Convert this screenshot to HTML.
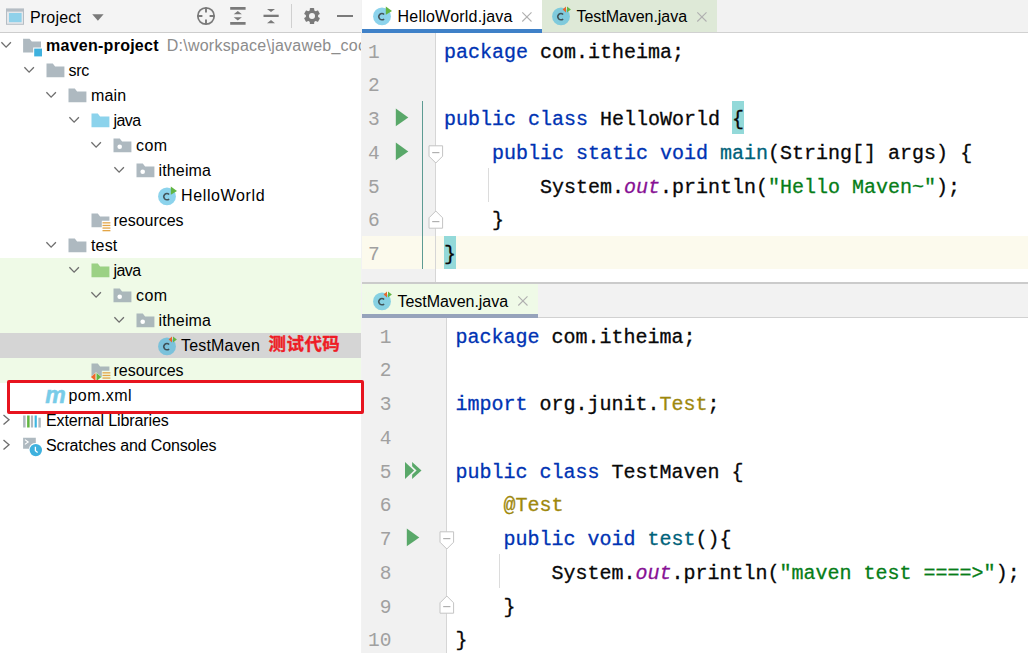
<!DOCTYPE html>
<html><head><meta charset="utf-8"><title>maven-project</title>
<style>
html,body{margin:0;padding:0}
body{width:1028px;height:653px;overflow:hidden;position:relative;background:#fff;font-family:"Liberation Sans", "Noto Sans CJK SC", sans-serif;font-size:16px;color:#000}
.abs{position:absolute}
#left{position:absolute;left:0;top:0;width:361px;height:653px;background:#fff;overflow:hidden}
#hdr{position:absolute;left:0;top:0;width:361px;height:32px;background:#f4f4f4;border-bottom:1px solid #cdcdcd}
.row{position:absolute;left:0;width:361px;height:25px;white-space:nowrap}
.row.g{background:#effae7}
.row.sel{background:#d5d5d5}
.arw{position:absolute;top:5.4px;width:14px;height:14px}
.icw{position:absolute;top:2.5px;width:20px;height:20px}
.ic,.ar{display:block;overflow:visible}
.tx{position:absolute;top:0;line-height:25px;height:25px;font-size:16px}
.path{color:#8c8c8c;font-weight:400;letter-spacing:0.23px;margin-left:8px}
.note{position:absolute;left:87.5px;top:-1.2px;line-height:25px;color:#ee1c25;font-weight:700;letter-spacing:0.45px;font-size:17.5px;-webkit-text-stroke:0.35px #ee1c25;font-family:"Liberation Sans","Noto Sans CJK SC",sans-serif}
.mvn{display:block;font:italic 700 23px/20px "Liberation Sans",sans-serif;color:#78cce8;margin-top:-0.8px;margin-left:0.8px;-webkit-text-stroke:0.5px #78cce8;letter-spacing:-1px}
#right{position:absolute;left:362px;top:0;width:666px;height:653px;background:#fff;overflow:hidden}
.tabs{position:absolute;left:0;width:666px;background:#f2f2f2}
.tab{position:absolute;top:0;height:100%}
.tt{position:absolute;top:0;line-height:31px;font-size:16px;white-space:nowrap}
.ed{position:absolute;left:0;width:666px;overflow:hidden;background:#fff;font-family:"Liberation Mono", "DejaVu Sans Mono", monospace;font-size:20px}
.gut{position:absolute;left:0;top:0;height:100%;background:#f1f1f1}
.gl{position:absolute;top:0;width:1px;height:100%;background:#d6d6d6}
.caret{position:absolute;left:0;width:666px;background:#fcfaed}
.ln{position:absolute;left:0;text-align:right;color:#a0a0a0;line-height:33.75px;height:33.75px;font-size:19.5px;margin-top:3.6px}
.cl{position:absolute;white-space:pre;line-height:33.75px;height:33.75px;color:#080808;margin-top:2.5px;-webkit-text-stroke:0.3px}
.k{color:#0033b3}.s{color:#067d17}.f{color:#871094;font-style:italic}.m{color:#00627a}.a{color:#9e880d}
.br{background:#93d9d9;display:inline-block;height:33.75px;margin-top:-2.5px;padding-top:2.5px;box-sizing:border-box;vertical-align:top}
#redbox{position:absolute;left:7px;top:380px;width:351px;height:28px;border:3px solid #e7141f;border-radius:2px}
</style></head><body>
<div id="left">
<div id="hdr">
<svg class="abs" style="left:5px;top:7px" width="20" height="20" viewBox="0 0 20 20"><rect x="1" y="1.4" width="18" height="16.4" fill="#b5bdc4"/><rect x="2" y="4.6" width="16" height="12.2" fill="#e4e7ea"/><rect x="4" y="6" width="12.6" height="9.2" fill="#8fd1ea"/></svg>
<span class="abs" style="left:30px;top:0.5px;line-height:33px;font-size:16px;letter-spacing:0.171px">Project</span>
<svg class="abs" style="left:92px;top:14px" width="12" height="8" viewBox="0 0 12 8"><path d="M0.2 0.2h11.4L5.9 6.8z" fill="#7a7a7a"/></svg>
<svg class="abs" style="left:196px;top:6px" width="20" height="20" viewBox="0 0 20 20"><circle cx="10" cy="10" r="8.2" fill="none" stroke="#7a7a7a" stroke-width="1.7"/><path d="M10 1.8v4.6M10 13.6v4.6M1.8 10h4.6M13.6 10h4.6" stroke="#7a7a7a" stroke-width="1.9"/></svg>
<svg class="abs" style="left:228px;top:6px" width="20" height="20" viewBox="0 0 20 20"><path d="M2.2 1.1h15.4v2.6H2.2zM2.2 16h15.4v2.7H2.2z" fill="#7a7a7a"/><path d="M9.8 5l4.1 3.2H5.7zM9.8 14.5l4.1-3.2H5.7z" fill="#7a7a7a"/></svg>
<svg class="abs" style="left:261px;top:6px" width="20" height="20" viewBox="0 0 20 20"><path d="M2.5 8.7h15.2v2.3H2.5z" fill="#7a7a7a"/><path d="M10 6.1l4-3.2H6zM10 14l4 3.3H6z" fill="#7a7a7a"/></svg>
<div class="abs" style="left:291px;top:4px;width:1px;height:24px;background:#d0d0d0"></div>
<svg class="abs" style="left:302px;top:6px" width="20" height="20" viewBox="0 0 20 20"><g transform="translate(10 10.1)" fill="#7a7a7a"><circle r="6.2"/><rect x="-2.2" y="-8" width="4.4" height="16" rx="0.7"/><rect x="-2.2" y="-8" width="4.4" height="16" rx="0.7" transform="rotate(60)"/><rect x="-2.2" y="-8" width="4.4" height="16" rx="0.7" transform="rotate(120)"/><circle r="3" fill="#f4f4f4"/></g></svg>
<div class="abs" style="left:337px;top:15px;width:15.5px;height:2.4px;background:#7a7a7a"></div>
</div>
<div class="row " style="top:33px"><span class="arw" style="left:-0.1px"><svg class="ar" width="14" height="14" viewBox="0 0 14 14"><path d="M1.4 4.2L6.1 9.1l4.8-4.9" fill="none" stroke="#6e6e6e" stroke-width="1.35"/></svg></span><span class="icw" style="left:22.0px"><svg class="ic" width="20" height="20" viewBox="0 0 20 20"><path d="M1.1 2.7h6.4l2.3 2.8H19v6.1h-7.8v4.9H1.1z" fill="#9aa7b0" fill-opacity="0.8"/><rect x="12.2" y="12.6" width="7.8" height="7.8" fill="#3eb1de"/></svg></span><span class="tx" style="left:46.0px;letter-spacing:0.000px"><b style="letter-spacing:0.263px">maven-project</b><span class="path">D:\workspace\javaweb_coc</span></span></div>
<div class="row " style="top:58px"><span class="arw" style="left:22.5px"><svg class="ar" width="14" height="14" viewBox="0 0 14 14"><path d="M1.4 4.2L6.1 9.1l4.8-4.9" fill="none" stroke="#6e6e6e" stroke-width="1.35"/></svg></span><span class="icw" style="left:44.5px"><svg class="ic" width="20" height="20" viewBox="0 0 20 20"><path d="M1.5 2.6h6.3l2.3 2.8h9.3v10.8H1.5z" fill="#9aa7b0" fill-opacity="0.8"/></svg></span><span class="tx" style="left:68.5px;letter-spacing:-0.277px">src</span></div>
<div class="row " style="top:83px"><span class="arw" style="left:45.1px"><svg class="ar" width="14" height="14" viewBox="0 0 14 14"><path d="M1.4 4.2L6.1 9.1l4.8-4.9" fill="none" stroke="#6e6e6e" stroke-width="1.35"/></svg></span><span class="icw" style="left:67.0px"><svg class="ic" width="20" height="20" viewBox="0 0 20 20"><path d="M1.5 2.6h6.3l2.3 2.8h9.3v10.8H1.5z" fill="#9aa7b0" fill-opacity="0.8"/></svg></span><span class="tx" style="left:91.0px;letter-spacing:0.178px">main</span></div>
<div class="row " style="top:108px"><span class="arw" style="left:67.7px"><svg class="ar" width="14" height="14" viewBox="0 0 14 14"><path d="M1.4 4.2L6.1 9.1l4.8-4.9" fill="none" stroke="#6e6e6e" stroke-width="1.35"/></svg></span><span class="icw" style="left:89.5px"><svg class="ic" width="20" height="20" viewBox="0 0 20 20"><path d="M1.5 2.6h6.3l2.3 2.8h9.3v10.8H1.5z" fill="#40b6e0" fill-opacity="0.6"/></svg></span><span class="tx" style="left:113.5px;letter-spacing:-0.540px">java</span></div>
<div class="row " style="top:133px"><span class="arw" style="left:90.3px"><svg class="ar" width="14" height="14" viewBox="0 0 14 14"><path d="M1.4 4.2L6.1 9.1l4.8-4.9" fill="none" stroke="#6e6e6e" stroke-width="1.35"/></svg></span><span class="icw" style="left:112.0px"><svg class="ic" width="20" height="20" viewBox="0 0 20 20"><path d="M1.5 2.6h6.3l2.3 2.8h9.3v10.8H1.5z" fill="#9aa7b0" fill-opacity="0.8"/><circle cx="7.7" cy="10.8" r="2.3" fill="#fff"/></svg></span><span class="tx" style="left:136.0px;letter-spacing:0.457px">com</span></div>
<div class="row " style="top:158px"><span class="arw" style="left:112.9px"><svg class="ar" width="14" height="14" viewBox="0 0 14 14"><path d="M1.4 4.2L6.1 9.1l4.8-4.9" fill="none" stroke="#6e6e6e" stroke-width="1.35"/></svg></span><span class="icw" style="left:134.5px"><svg class="ic" width="20" height="20" viewBox="0 0 20 20"><path d="M1.5 2.6h6.3l2.3 2.8h9.3v10.8H1.5z" fill="#9aa7b0" fill-opacity="0.8"/><circle cx="7.7" cy="10.8" r="2.3" fill="#fff"/></svg></span><span class="tx" style="left:158.5px;letter-spacing:0.146px">itheima</span></div>
<div class="row " style="top:183px"><span class="icw" style="left:157.0px"><svg class="ic" width="20" height="20" viewBox="0 0 20 20"><circle cx="10" cy="10.4" r="8.9" fill="#40b6e0" fill-opacity="0.6"/><path d="M12.1 8.4a3.05 3.2 0 1 0 0 4.5" fill="none" stroke="#231f20" stroke-opacity="0.7" stroke-width="1.5"/><path d="M13.8 0.6v8.1L20 4.9z" fill="#62b543"/></svg></span><span class="tx" style="left:181.0px;letter-spacing:0.625px">HelloWorld</span></div>
<div class="row " style="top:208px"><span class="icw" style="left:89.5px"><svg class="ic" width="20" height="20" viewBox="0 0 20 20"><path d="M1.5 2.6h6.3l2.3 2.8h9.3V9.8h-7.6v6.4H1.5z" fill="#9aa7b0" fill-opacity="0.8"/><rect x="12.5" y="11.2" width="7.9" height="1.3" fill="#e3a546"/><rect x="12.5" y="13.8" width="7.9" height="1.3" fill="#e3a546"/><rect x="12.5" y="16.4" width="7.9" height="1.3" fill="#e3a546"/><rect x="12.5" y="19.0" width="7.9" height="1.3" fill="#e3a546"/></svg></span><span class="tx" style="left:113.5px;letter-spacing:-0.028px">resources</span></div>
<div class="row " style="top:233px"><span class="arw" style="left:45.1px"><svg class="ar" width="14" height="14" viewBox="0 0 14 14"><path d="M1.4 4.2L6.1 9.1l4.8-4.9" fill="none" stroke="#6e6e6e" stroke-width="1.35"/></svg></span><span class="icw" style="left:67.0px"><svg class="ic" width="20" height="20" viewBox="0 0 20 20"><path d="M1.5 2.6h6.3l2.3 2.8h9.3v10.8H1.5z" fill="#9aa7b0" fill-opacity="0.8"/></svg></span><span class="tx" style="left:91.0px;letter-spacing:0.150px">test</span></div>
<div class="row g" style="top:258px"><span class="arw" style="left:67.7px"><svg class="ar" width="14" height="14" viewBox="0 0 14 14"><path d="M1.4 4.2L6.1 9.1l4.8-4.9" fill="none" stroke="#6e6e6e" stroke-width="1.35"/></svg></span><span class="icw" style="left:89.5px"><svg class="ic" width="20" height="20" viewBox="0 0 20 20"><path d="M1.5 2.6h6.3l2.3 2.8h9.3v10.8H1.5z" fill="#62b543" fill-opacity="0.6"/></svg></span><span class="tx" style="left:113.5px;letter-spacing:-0.540px">java</span></div>
<div class="row g" style="top:283px"><span class="arw" style="left:90.3px"><svg class="ar" width="14" height="14" viewBox="0 0 14 14"><path d="M1.4 4.2L6.1 9.1l4.8-4.9" fill="none" stroke="#6e6e6e" stroke-width="1.35"/></svg></span><span class="icw" style="left:112.0px"><svg class="ic" width="20" height="20" viewBox="0 0 20 20"><path d="M1.5 2.6h6.3l2.3 2.8h9.3v10.8H1.5z" fill="#9aa7b0" fill-opacity="0.8"/><circle cx="7.7" cy="10.8" r="2.3" fill="#fff"/></svg></span><span class="tx" style="left:136.0px;letter-spacing:0.457px">com</span></div>
<div class="row g" style="top:308px"><span class="arw" style="left:112.9px"><svg class="ar" width="14" height="14" viewBox="0 0 14 14"><path d="M1.4 4.2L6.1 9.1l4.8-4.9" fill="none" stroke="#6e6e6e" stroke-width="1.35"/></svg></span><span class="icw" style="left:134.5px"><svg class="ic" width="20" height="20" viewBox="0 0 20 20"><path d="M1.5 2.6h6.3l2.3 2.8h9.3v10.8H1.5z" fill="#9aa7b0" fill-opacity="0.8"/><circle cx="7.7" cy="10.8" r="2.3" fill="#fff"/></svg></span><span class="tx" style="left:158.5px;letter-spacing:0.146px">itheima</span></div>
<div class="row sel" style="top:333px"><span class="icw" style="left:157.0px"><svg class="ic" width="20" height="20" viewBox="0 0 20 20"><circle cx="10" cy="10.4" r="8.9" fill="#40b6e0" fill-opacity="0.6"/><path d="M12.1 8.4a3.05 3.2 0 1 0 0 4.5" fill="none" stroke="#231f20" stroke-opacity="0.7" stroke-width="1.5"/><path d="M15 0.4v6.1L11.6 3.5z" fill="#e8662c"/><path d="M16 0.4v6.1l3.9-3z" fill="#62b543"/></svg></span><span class="tx" style="left:181.0px;letter-spacing:0.180px">TestMaven<span class="note">测试代码</span></span></div>
<div class="row g" style="top:358px"><span class="icw" style="left:89.5px"><svg class="ic" width="20" height="20" viewBox="0 0 20 20"><path d="M1.5 2.6h6.3l2.3 2.8h9.3V9.8h-7.6v6.4H1.5z" fill="#9aa7b0" fill-opacity="0.8"/><rect x="12.5" y="11.2" width="7.9" height="1.3" fill="#e3a546"/><rect x="12.5" y="13.8" width="7.9" height="1.3" fill="#e3a546"/><rect x="12.5" y="16.4" width="7.9" height="1.3" fill="#e3a546"/><rect x="12.5" y="19.0" width="7.9" height="1.3" fill="#e3a546"/><path d="M6 11.2L0.6 16l5.4 4.8L11.6 16z" fill="#effae7"/><path d="M5.5 11.9v8.2L0.9 16z" fill="#f0672a"/><path d="M6.5 11.9v8.2L11.3 16z" fill="#62b543"/></svg></span><span class="tx" style="left:113.5px;letter-spacing:-0.028px">resources</span></div>
<div class="row " style="top:383px"><span class="icw" style="left:44.5px"><span class="mvn">m</span></span><span class="tx" style="left:68.5px;letter-spacing:0.436px">pom.xml</span></div>
<div class="row " style="top:408px"><span class="arw" style="left:-0.1px"><svg class="ar" width="14" height="14" viewBox="0 0 14 14"><path d="M3.5 2L9 6.8l-5.5 4.7" fill="none" stroke="#6e6e6e" stroke-width="1.35"/></svg></span><span class="icw" style="left:22.0px"><svg class="ic" width="20" height="20" viewBox="0 0 20 20"><rect x="1.1" y="4.5" width="2.5" height="12.0" fill="#9aa7b0" fill-opacity="0.8"/><rect x="5.1" y="4.5" width="2.5" height="12.0" fill="#62b543" fill-opacity="1"/><rect x="8.9" y="4.5" width="2.2" height="12.0" fill="#9aa7b0" fill-opacity="0.8"/><rect x="12.6" y="4.5" width="2.2" height="12.0" fill="#40b6e0" fill-opacity="1"/><rect x="16.4" y="6.7" width="2.4" height="9.8" fill="#9aa7b0" fill-opacity="0.8"/></svg></span><span class="tx" style="left:46.0px;letter-spacing:-0.106px">External Libraries</span></div>
<div class="row " style="top:433px"><span class="arw" style="left:-0.1px"><svg class="ar" width="14" height="14" viewBox="0 0 14 14"><path d="M3.5 2L9 6.8l-5.5 4.7" fill="none" stroke="#6e6e6e" stroke-width="1.35"/></svg></span><span class="icw" style="left:22.0px"><svg class="ic" width="20" height="20" viewBox="0 0 20 20"><path d="M1.1 1.8h12.7v5.2a7 7 0 0 0-6.9 5.7H1.1z" fill="#9aa7b0" fill-opacity="0.8"/><path d="M2.9 3.6l3.3 2.4-3.3 2.4" fill="none" stroke="#fff" stroke-width="1.1"/><circle cx="13.8" cy="14.1" r="6.2" fill="#3eb1de"/><path d="M13.4 10.7v4l2.2 1.7" fill="none" stroke="#fff" stroke-width="1.3"/></svg></span><span class="tx" style="left:46.0px;letter-spacing:-0.143px">Scratches and Consoles</span></div>
</div>
<div id="right">
<div class="tabs" style="top:0;height:32px;border-bottom:1px solid #d1d1d1">
<div class="tab" style="left:0px;width:180px;background:#fff"><span class="abs" style="left:10.2px;top:5.8px"><svg class="ic" width="20" height="20" viewBox="0 0 20 20"><circle cx="10" cy="10.4" r="8.9" fill="#40b6e0" fill-opacity="0.6"/><path d="M12.1 8.4a3.05 3.2 0 1 0 0 4.5" fill="none" stroke="#231f20" stroke-opacity="0.7" stroke-width="1.5"/><path d="M13.8 0.6v8.1L20 4.9z" fill="#62b543"/></svg></span><span class="tt" style="left:35.5px;top:0.5px;letter-spacing:0.230px">HelloWorld.java</span><svg class="abs" style="left:158.8px;top:10.5px" width="12" height="12" viewBox="0 0 12 12"><path d="M1.3 1.3l9.2 9.2M10.5 1.3l-9.2 9.2" stroke="#b0b0b0" stroke-width="1.1" fill="none"/></svg><div class="abs" style="left:0;top:29.0px;width:100%;height:4px;background:#3f81c8"></div></div>
<div class="tab" style="left:180px;width:175px;background:#dee9d7"><span class="abs" style="left:8.8px;top:5.8px"><svg class="ic" width="20" height="20" viewBox="0 0 20 20"><circle cx="10" cy="10.4" r="8.9" fill="#40b6e0" fill-opacity="0.6"/><path d="M12.1 8.4a3.05 3.2 0 1 0 0 4.5" fill="none" stroke="#231f20" stroke-opacity="0.7" stroke-width="1.5"/><path d="M15 0.4v6.1L11.6 3.5z" fill="#e8662c"/><path d="M16 0.4v6.1l3.9-3z" fill="#62b543"/></svg></span><span class="tt" style="left:34.5px;top:0.5px;letter-spacing:-0.048px">TestMaven.java</span><svg class="abs" style="left:153.8px;top:10.5px" width="12" height="12" viewBox="0 0 12 12"><path d="M1.3 1.3l9.2 9.2M10.5 1.3l-9.2 9.2" stroke="#b0b0b0" stroke-width="1.1" fill="none"/></svg></div>
</div>
<div class="ed" style="top:33.00px;height:249.00px"><div class="gut" style="width:73px"></div><div class="caret" style="top:202.50px;height:33.75px"></div><div class="gl" style="left:73px"></div><div class="ln" style="top:0.00px;width:17.6px">1</div><div class="cl" style="top:0.00px;left:82.0px"><span class="k">package</span> com.itheima;</div><div class="ln" style="top:33.75px;width:17.6px">2</div><div class="cl" style="top:33.75px;left:82.0px"></div><div class="ln" style="top:67.50px;width:17.6px">3</div><div class="cl" style="top:67.50px;left:82.0px"><span class="k">public class</span> HelloWorld <span class="br">{</span></div><div class="ln" style="top:101.25px;width:17.6px">4</div><div class="cl" style="top:101.25px;left:82.0px">    <span class="k">public static void</span> <span class="m">main</span>(String[] args) {</div><div class="ln" style="top:135.00px;width:17.6px">5</div><div class="cl" style="top:135.00px;left:82.0px">        System.<span class="f">out</span>.println(<span class="s">"Hello Maven~"</span>);</div><div class="ln" style="top:168.75px;width:17.6px">6</div><div class="cl" style="top:168.75px;left:82.0px">    }</div><div class="ln" style="top:202.50px;width:17.6px">7</div><div class="cl" style="top:202.50px;left:82.0px"><span class="br">}</span></div><div class="abs" style="left:60px;top:68.00px;width:1px;height:168.25px;background:#5d9b93"></div><svg class="abs" style="left:33.0px;top:75.2px" width="14" height="19" viewBox="0 0 14 19"><path d="M0.8 0.6v17.6L13.3 9.4z" fill="#59a869"/></svg><svg class="abs" style="left:33.0px;top:109.0px" width="14" height="19" viewBox="0 0 14 19"><path d="M0.8 0.6v17.6L13.3 9.4z" fill="#59a869"/></svg><svg class="abs" style="left:65.6px;top:111.5px" width="16" height="19" viewBox="0 0 16 19"><path d="M1 0.8h13.6v10.4L7.8 18 1 11.2z" fill="#fff" stroke="#c4c4c4" stroke-width="1"/><path d="M4.2 7.6h7.2" stroke="#b0b0b0" stroke-width="1.2"/></svg><svg class="abs" style="left:65.6px;top:176.8px" width="16" height="19" viewBox="0 0 16 19"><path d="M1 18.2h13.6V7.8L7.8 1 1 7.8z" fill="#fff" stroke="#c4c4c4" stroke-width="1"/><path d="M4.2 11.6h7.2" stroke="#b0b0b0" stroke-width="1.2"/></svg><div class="abs" style="left:126px;top:135.00px;width:1px;height:33.75px;background:#dcdcdc"></div></div>
<div class="abs" style="left:0;top:282px;width:666px;height:2px;background:#cbcbcb"></div>
<div class="tabs" style="top:284px;height:33px;border-bottom:1px solid #d1d1d1">
<div class="tab" style="left:0px;width:176px;background:#effae7"><span class="abs" style="left:10.0px;top:6.6px"><svg class="ic" width="20" height="20" viewBox="0 0 20 20"><circle cx="10" cy="10.4" r="8.9" fill="#40b6e0" fill-opacity="0.6"/><path d="M12.1 8.4a3.05 3.2 0 1 0 0 4.5" fill="none" stroke="#231f20" stroke-opacity="0.7" stroke-width="1.5"/><path d="M15 0.4v6.1L11.6 3.5z" fill="#e8662c"/><path d="M16 0.4v6.1l3.9-3z" fill="#62b543"/></svg></span><span class="tt" style="left:35.5px;top:1.6px;letter-spacing:-0.048px">TestMaven.java</span><svg class="abs" style="left:154.8px;top:11.2px" width="12" height="12" viewBox="0 0 12 12"><path d="M1.3 1.3l9.2 9.2M10.5 1.3l-9.2 9.2" stroke="#b0b0b0" stroke-width="1.1" fill="none"/></svg><div class="abs" style="left:0;top:30.0px;width:100%;height:4px;background:#96a3bb"></div></div>
</div>
<div class="ed" style="top:318.00px;height:335.00px"><div class="gut" style="width:84px"></div><div class="gl" style="left:84px"></div><div class="ln" style="top:0.00px;width:29.5px">1</div><div class="cl" style="top:0.00px;left:93.5px"><span class="k">package</span> com.itheima;</div><div class="ln" style="top:33.75px;width:29.5px">2</div><div class="cl" style="top:33.75px;left:93.5px"></div><div class="ln" style="top:67.50px;width:29.5px">3</div><div class="cl" style="top:67.50px;left:93.5px"><span class="k">import</span> org.junit.<span class="a">Test</span>;</div><div class="ln" style="top:101.25px;width:29.5px">4</div><div class="cl" style="top:101.25px;left:93.5px"></div><div class="ln" style="top:135.00px;width:29.5px">5</div><div class="cl" style="top:135.00px;left:93.5px"><span class="k">public class</span> TestMaven {</div><div class="ln" style="top:168.75px;width:29.5px">6</div><div class="cl" style="top:168.75px;left:93.5px">    <span class="a">@Test</span></div><div class="ln" style="top:202.50px;width:29.5px">7</div><div class="cl" style="top:202.50px;left:93.5px">    <span class="k">public void</span> <span class="m">test</span>(){</div><div class="ln" style="top:236.25px;width:29.5px">8</div><div class="cl" style="top:236.25px;left:93.5px">        System.<span class="f">out</span>.println(<span class="s">"maven test ====&gt;"</span>);</div><div class="ln" style="top:270.00px;width:29.5px">9</div><div class="cl" style="top:270.00px;left:93.5px">    }</div><div class="ln" style="top:303.75px;width:29.5px">10</div><div class="cl" style="top:303.75px;left:93.5px">}</div><svg class="abs" style="left:42.0px;top:143.0px" width="20" height="19" viewBox="0 0 20 19"><path d="M8.1 0.9v17.1L17.5 9.6z" fill="#59a869"/><path d="M1 0.9v17.1L10.1 9.6z" fill="none" stroke="#f1f1f1" stroke-width="3.4"/><path d="M1 0.9v17.1L10.1 9.6z" fill="#59a869"/></svg><svg class="abs" style="left:44.4px;top:210.2px" width="14" height="19" viewBox="0 0 14 19"><path d="M0.8 0.6v17.6L13.3 9.4z" fill="#59a869"/></svg><svg class="abs" style="left:76.6px;top:212.7px" width="16" height="19" viewBox="0 0 16 19"><path d="M1 0.8h13.6v10.4L7.8 18 1 11.2z" fill="#fff" stroke="#c4c4c4" stroke-width="1"/><path d="M4.2 7.6h7.2" stroke="#b0b0b0" stroke-width="1.2"/></svg><svg class="abs" style="left:76.6px;top:277.2px" width="16" height="19" viewBox="0 0 16 19"><path d="M1 18.2h13.6V7.8L7.8 1 1 7.8z" fill="#fff" stroke="#c4c4c4" stroke-width="1"/><path d="M4.2 11.6h7.2" stroke="#b0b0b0" stroke-width="1.2"/></svg><div class="abs" style="left:137px;top:236.25px;width:1px;height:33.75px;background:#dcdcdc"></div></div>
</div>
<div class="abs" style="left:361px;top:0;width:1px;height:653px;background:#f2f2f2"></div>
<div id="redbox"></div>
</body></html>
